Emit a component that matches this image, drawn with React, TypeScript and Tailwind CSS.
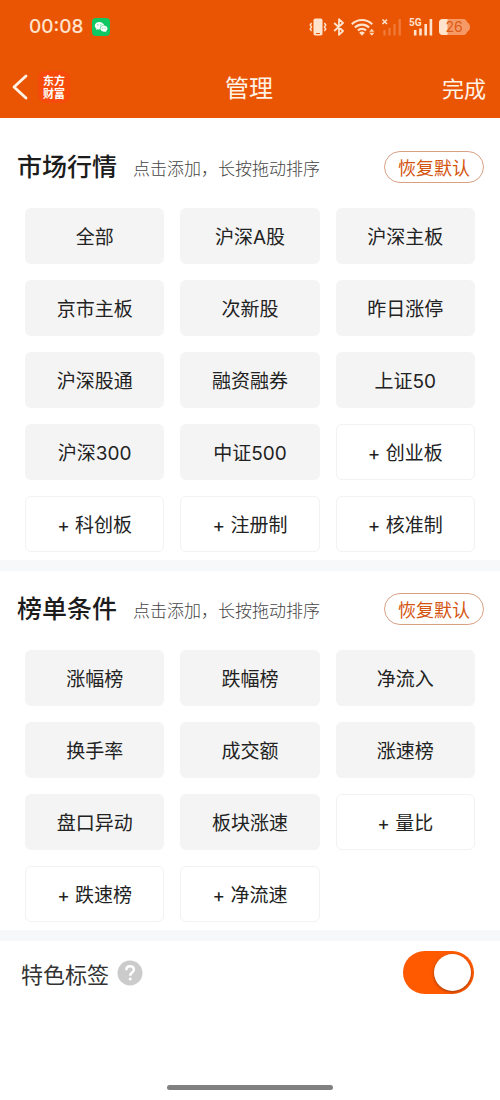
import { useState } from "react";

type Tile = { name: string; added: boolean };

const marketTiles: Tile[] = [
  { name: "全部", added: true },
  { name: "沪深A股", added: true },
  { name: "沪深主板", added: true },
  { name: "京市主板", added: true },
  { name: "次新股", added: true },
  { name: "昨日涨停", added: true },
  { name: "沪深股通", added: true },
  { name: "融资融券", added: true },
  { name: "上证50", added: true },
  { name: "沪深300", added: true },
  { name: "中证500", added: true },
  { name: "创业板", added: false },
  { name: "科创板", added: false },
  { name: "注册制", added: false },
  { name: "核准制", added: false },
];

const rankTiles: Tile[] = [
  { name: "涨幅榜", added: true },
  { name: "跌幅榜", added: true },
  { name: "净流入", added: true },
  { name: "换手率", added: true },
  { name: "成交额", added: true },
  { name: "涨速榜", added: true },
  { name: "盘口异动", added: true },
  { name: "板块涨速", added: true },
  { name: "量比", added: false },
  { name: "跌速榜", added: false },
  { name: "净流速", added: false },
];

function WeChatIcon() {
  return (
    <svg width="18" height="18" viewBox="0 0 18 18" aria-hidden="true">
      <rect width="18" height="18" rx="4" fill="#0fc763" />
      <path
        d="M7.4 4C4.8 4 2.8 5.7 2.8 7.8c0 1.2.7 2.2 1.7 2.9l-.4 1.4 1.6-.8c.5.2 1.1.3 1.7.3h.4a3.6 3.6 0 0 1-.1-.9c0-2 1.9-3.5 4.2-3.5h.2C11.6 5.4 9.7 4 7.4 4z"
        fill="#fff"
      />
      <path
        d="M15.5 10.6c0-1.7-1.6-3.1-3.6-3.1s-3.6 1.4-3.6 3.1 1.6 3.1 3.6 3.1c.4 0 .9-.1 1.3-.2l1.2.7-.3-1.2c.9-.6 1.4-1.4 1.4-2.4z"
        fill="#fff"
      />
      <g fill="#0fc763">
        <circle cx="5.9" cy="6.8" r=".6" />
        <circle cx="8.9" cy="6.8" r=".6" />
        <circle cx="10.8" cy="9.9" r=".5" />
        <circle cx="13.1" cy="9.9" r=".5" />
      </g>
    </svg>
  );
}

function VibrateIcon() {
  return (
    <svg width="18" height="18" viewBox="0 0 18 18" aria-hidden="true">
      <rect x="4.5" y="0.5" width="9" height="17" rx="1.8" fill="#ffe3cc" />
      <path d="M7 15.5h4" stroke="#ea5504" strokeWidth="1" />
      <path
        d="M2.6 5 1.2 7l1.4 2-1.4 2 1.4 2M15.4 5l1.4 2-1.4 2 1.4 2-1.4 2"
        fill="none"
        stroke="#ffe3cc"
        strokeWidth="1.4"
      />
    </svg>
  );
}

function BluetoothIcon() {
  return (
    <svg width="12" height="18" viewBox="0 0 12 18" aria-hidden="true">
      <path
        d="M1.2 5 10 13l-4 3.8V1.200L10 5l-8.800 8"
        fill="none"
        stroke="#ffe3cc"
        strokeWidth="1.8"
        strokeLinejoin="round"
      />
    </svg>
  );
}

function WifiIcon() {
  return (
    <svg width="24" height="18" viewBox="0 0 24 18" aria-hidden="true">
      <g fill="none" stroke="#ffe3cc" strokeWidth="2.1">
        <path d="M.8 6.2a14.5 14.5 0 0 1 20.4 0" />
        <path d="M3.9 9.6a10 10 0 0 1 14.2 0" />
        <path d="M6.9 12.6a5.8 5.8 0 0 1 8.2 0" />
      </g>
      <path d="M11 17.8 8.2 14.8a4 4 0 0 1 5.6 0z" fill="#ffe3cc" />
      <path d="m20.8 10.8 2.6 3h-5.200zM20.800 17.800l2.600-3h-5.200z" fill="#ffd8b8" />
    </svg>
  );
}

function NoSimIcon() {
  return (
    <svg width="22" height="18" viewBox="0 0 22 18" aria-hidden="true">
      <path d="m1.5 1.5 4.5 4.5M6 1.5 1.5 6" stroke="#ffe3cc" strokeWidth="1.6" />
      <g stroke="#f5965f" strokeWidth="2.2" opacity=".6">
        <path d="M3.5 12v5.5M8.5 10v7.5M13.5 6v11.5M18.7 1v16.5" />
      </g>
    </svg>
  );
}

function SignalIcon() {
  return (
    <span className="relative block h-[18px] w-6">
      <svg width="24" height="18" viewBox="0 0 24 18" aria-hidden="true">
        <path
          d="M6.2 12v5.5M11.5 10.5v7M16.7 6v11.5M21.9 1v16.5"
          stroke="#ffe3cc"
          strokeWidth="2.6"
        />
      </svg>
      <span className="absolute top-0 left-0 font-['Roboto',sans-serif] text-[10px] leading-[9px] font-bold text-[#ffe3cc]">
        5G
      </span>
    </span>
  );
}

function Battery() {
  return (
    <span className="relative block h-[18px] w-8">
      <svg width="32" height="18" viewBox="0 0 32 18" aria-hidden="true">
        <rect x="0" y="1" width="28" height="16" rx="4" fill="#f59a66" />
        <path d="M28 4c4 2 4 8 0 10z" fill="#f59a66" />
        <path d="M8.5 1H4a4 4 0 0 0-4 4v8a4 4 0 0 0 4 4h4.500z" fill="#ffe3cc" />
      </svg>
      <span className="absolute inset-y-0 left-0 w-[30px] text-center font-['Inter',sans-serif] text-[14px] leading-[18px] text-[#dd5a14]">
        26
      </span>
    </span>
  );
}

function TileSection({ title, tiles }: { title: string; tiles: Tile[] }) {
  return (
    <section className="pb-2">
      <div className="flex h-[79px] items-center pr-4 pb-1 pl-[17px]">
        <h2 className="mb-1 text-[25px] leading-8 font-medium text-[#1c1c1c]">{title}</h2>
        <p className="mt-0.5 ml-4 text-[17px] leading-6 font-light whitespace-nowrap text-[#444]">
          点击添加，长按拖动排序
        </p>
        <button
          type="button"
          className="ml-auto h-8 rounded-full border border-[#d9a184] px-[13px] text-[18px] leading-6 whitespace-nowrap text-[#d4550f]"
        >
          恢复默认
        </button>
      </div>
      <div className="grid grid-cols-3 gap-4 px-[25px] font-['Inter','Noto_Sans_CJK_SC',sans-serif]">
        {tiles.map((tile) => (
          <button
            key={tile.name}
            type="button"
            className={
              tile.added
                ? "h-14 rounded-md bg-[#f4f4f4] pt-1 text-[19px] text-[#222]"
                : "h-14 rounded-md border border-[#f2f2f2] bg-white pt-1 text-[19px] text-[#222]"
            }
          >
            {tile.added ? tile.name : `+ ${tile.name}`}
          </button>
        ))}
      </div>
    </section>
  );
}

export default function App() {
  const [labelsOn, setLabelsOn] = useState(true);

  return (
    <div className="flex min-h-screen flex-col bg-white font-['Noto_Sans_CJK_SC',sans-serif]">
      <header className="bg-[#ea5504]">
        <div className="flex h-[54px] items-center px-[29px]">
          <span className="font-['Inter','Noto_Sans_CJK_SC',sans-serif] text-[19px] leading-6 font-medium text-[#ffe3cc]">
            00:08
          </span>
          <span className="ml-2">
            <WeChatIcon />
          </span>
          <div className="ml-auto flex items-center gap-1.5">
            <VibrateIcon />
            <BluetoothIcon />
            <WifiIcon />
            <NoSimIcon />
            <SignalIcon />
            <Battery />
          </div>
        </div>
        <div className="grid h-16 grid-cols-3 items-center pt-0.5 pr-[14px] pl-3 text-[#fff3e6]">
          <div className="flex items-center gap-2.5">
            <button type="button" aria-label="返回">
              <svg width="16" height="26" viewBox="0 0 16 26" aria-hidden="true">
                <path
                  d="M14 2 2 13l12 11"
                  fill="none"
                  stroke="#fff3e6"
                  strokeWidth="2.8"
                  strokeLinecap="round"
                  strokeLinejoin="round"
                />
              </svg>
            </button>
            <span className="flex size-8 items-center justify-center rounded-lg bg-[#f64a0a]">
              <span className="w-[22px] text-[11px] leading-[13px] font-bold break-all text-white">
                东方财富
              </span>
            </span>
          </div>
          <h1 className="text-center text-2xl">管理</h1>
          <button type="button" className="justify-self-end text-[22px] leading-8">
            完成
          </button>
        </div>
      </header>

      <main>
        <div className="pt-[11px]">
          <TileSection title="市场行情" tiles={marketTiles} />
        </div>
        <div className="h-[11px] bg-[#f6f8fa]" />
        <TileSection title="榜单条件" tiles={rankTiles} />
        <div className="h-[11px] bg-[#f6f8fa]" />
        <div className="flex h-[63px] items-center pr-[26px] pl-[21px]">
          <label htmlFor="feature-labels" className="text-[22px] leading-8 text-[#333]">
            特色标签
          </label>
          <button type="button" aria-label="说明" className="ml-2">
            <svg width="26" height="26" viewBox="0 0 26 26" aria-hidden="true">
              <circle cx="13" cy="13" r="12.5" fill="#cbcbcb" />
              <path
                d="M9.3 10.2c0-2.3 1.5-3.9 3.8-3.9s3.8 1.4 3.8 3.4c0 2.7-3.700 3-3.700 6"
                fill="none"
                stroke="#fff"
                strokeWidth="2.4"
              />
              <circle cx="13.2" cy="19" r="1.5" fill="#fff" />
            </svg>
          </button>
          <span className="relative ml-auto block h-[43px] w-[71px]">
            <input
              id="feature-labels"
              type="checkbox"
              role="switch"
              checked={labelsOn}
              onChange={(event) => setLabelsOn(event.target.checked)}
              className="peer block size-full cursor-pointer appearance-none rounded-full bg-[#ccc] checked:bg-[#ff5a00]"
            />
            <span className="pointer-events-none absolute top-[3px] left-[3px] size-[37px] rounded-full bg-white shadow-[0_1px_3px_rgba(0,0,0,0.4)] peer-checked:left-[31px]" />
          </span>
        </div>
      </main>

      <footer className="mt-auto flex justify-center pb-[10px]">
        <div className="h-[5px] w-1/3 rounded-full bg-[#808080]" />
      </footer>
    </div>
  );
}
